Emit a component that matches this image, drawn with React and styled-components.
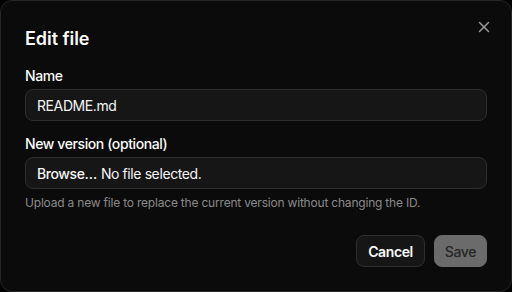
import React from "react";
import styled, { createGlobalStyle } from "styled-components";

const Global = createGlobalStyle`
  html, body { margin: 0; padding: 0; background: #000; }
  body { font-family: Inter, "Noto Sans", sans-serif; -webkit-font-smoothing: antialiased; letter-spacing: -0.025em; }
  * { box-sizing: border-box; }
`;

const Dialog = styled.div`
  position: relative;
  width: 512px;
  height: 292px;
  background: #0b0b0b;
  border: 1px solid #262626;
  border-radius: 12px;
  padding: 24px;
  display: flex;
  flex-direction: column;
  color: #fafafa;
`;

const Title = styled.h2`
  margin: 0 0 13px;
  font-size: 18px;
  line-height: 28px;
  font-weight: 600;
  letter-spacing: -0.05px;
`;

const Close = styled.button`
  position: absolute;
  top: 17px;
  right: 18px;
  width: 18px;
  height: 18px;
  padding: 0;
  border: none;
  background: transparent;
  color: #9a9a9a;
  display: flex;
`;

const Field = styled.div`
  display: flex;
  flex-direction: column;
  margin-bottom: ${(p) => p.$mb || 0}px;
`;

const Label = styled.label`
  font-size: 14px;
  line-height: 20px;
  font-weight: 500;
  margin-bottom: 3px;
`;

const Input = styled.div`
  height: 32px;
  border: 1px solid #2e2e2e;
  background: #161616;
  border-radius: 8px;
  padding: 0 11px;
  display: flex;
  align-items: center;
  font-size: 14px;
  color: #f5f5f5;
`;

const FileBtn = styled.span`
  font-weight: 500;
  margin-right: 4px;
`;

const Help = styled.p`
  margin: 6px 0 0;
  font-size: 12px;
  line-height: 16px;
  letter-spacing: -0.2px;
  color: #8a8a8a;
`;

const Footer = styled.div`
  margin-top: 24px;
  display: flex;
  justify-content: flex-end;
  gap: 9px;
`;

const Button = styled.button`
  height: 32px;
  padding: 0 ${(p) => (p.$primary ? 10 : 11)}px;
  border-radius: 8px;
  font-family: inherit;
  letter-spacing: inherit;
  font-size: 14px;
  font-weight: ${(p) => (p.$primary ? 500 : 600)};
  border: 1px solid ${(p) => (p.$primary ? "#6b6b6b" : "#2e2e2e")};
  background: ${(p) => (p.$primary ? "#6b6b6b" : "#161616")};
  color: ${(p) => (p.$primary ? "#262626" : "#fafafa")};
`;

export default function App() {
  return (
    <>
      <Global />
      <Dialog>
        <Close aria-label="Close">
          <svg width="18" height="18" viewBox="0 0 24 24" fill="none" stroke="currentColor" strokeWidth="2" strokeLinecap="round">
            <path d="M18 6 6 18" />
            <path d="m6 6 12 12" />
          </svg>
        </Close>
        <Title>Edit file</Title>
        <Field $mb={13}>
          <Label>Name</Label>
          <Input>README.md</Input>
        </Field>
        <Field>
          <Label>New version (optional)</Label>
          <Input>
            <FileBtn>Browse…</FileBtn>No file selected.
          </Input>
          <Help>Upload a new file to replace the current version without changing the ID.</Help>
        </Field>
        <Footer>
          <Button>Cancel</Button>
          <Button $primary>Save</Button>
        </Footer>
      </Dialog>
    </>
  );
}
